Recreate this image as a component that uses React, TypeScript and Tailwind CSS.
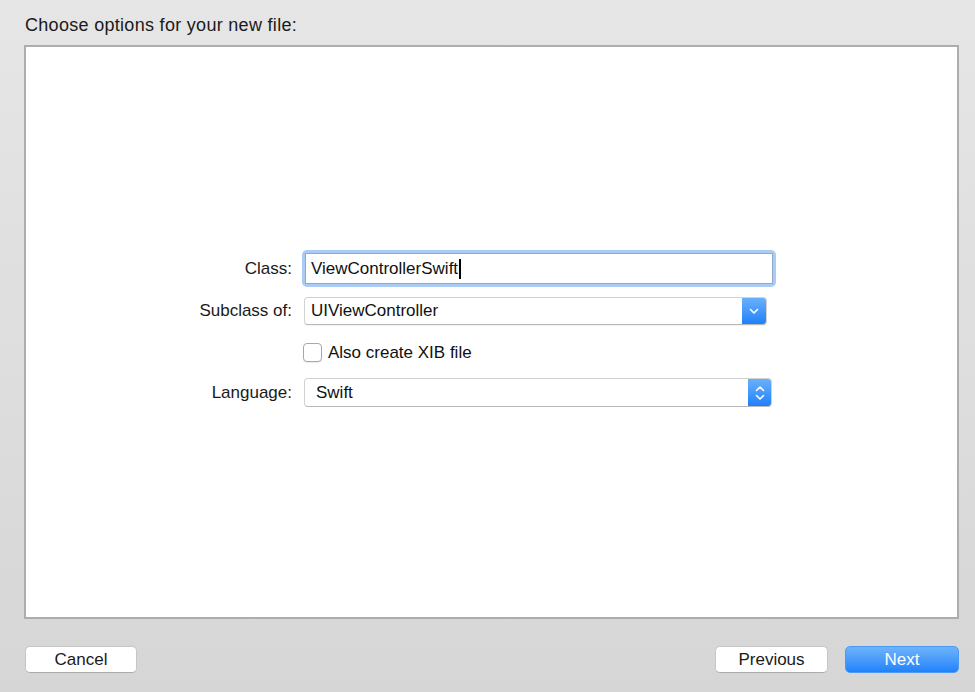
import { useState } from 'react';

function ChevronDown() {
  return (
    <svg width="10" height="7" viewBox="0 0 10 7" fill="none">
      <path d="M1.5 1.5 L5 5 L8.5 1.5" stroke="white" strokeWidth="1.6" strokeLinecap="round" strokeLinejoin="round" />
    </svg>
  );
}

function ChevronUpDown() {
  return (
    <svg width="10" height="16" viewBox="0 0 10 16" fill="none">
      <path d="M1.5 5.5 L5 2 L8.5 5.5" stroke="white" strokeWidth="1.6" strokeLinecap="round" strokeLinejoin="round" />
      <path d="M1.5 10.5 L5 14 L8.5 10.5" stroke="white" strokeWidth="1.6" strokeLinecap="round" strokeLinejoin="round" />
    </svg>
  );
}

function Label({ text }: { text: string }) {
  return <div className="w-[92px] flex justify-end whitespace-nowrap text-[17px] text-[#1a1a1a]">{text}</div>;
}

function App() {
  const [xib, setXib] = useState(false);

  return (
    <div className="w-[975px] h-[692px] flex flex-col bg-linear-to-b from-[#e6e6e6] to-[#d6d6d6] pl-[24px] pr-[16px] font-['Liberation_Sans',Arial,sans-serif] text-[#222]">
      {/* Title */}
      <div className="h-[45px] pt-[14px] pl-[1px] text-[18px] leading-[22px] tracking-[0.3px] text-[#1a1a1a]">
        Choose options for your new file:
      </div>

      {/* Options panel */}
      <div className="h-[574px] border-2 border-[#adadad] bg-white flex flex-col pt-[203px] pl-[174px]">
        {/* Class */}
        <div className="flex items-center h-[37px]">
          <Label text="Class:" />
          <div className="ml-[10px] w-[474px] h-[37px] rounded-[5px] bg-[#a9cbf4] p-[3px]">
            <div className="h-full bg-white border border-[#8fa9c9] flex items-center pl-[5px] text-[17px] text-[#111]">
              ViewControllerSwift
              <span className="ml-[1px] w-[1.5px] h-[20px] bg-black" />
            </div>
          </div>
        </div>

        {/* Subclass of */}
        <div className="flex items-center h-[28px] mt-[10px]">
          <Label text="Subclass of:" />
          <div className="ml-[12px] w-[463px] h-[28px] flex rounded-[4px] bg-white border border-[#d2d2d2] border-b-[#b8b8b8] shadow-[0_1px_0_rgba(0,0,0,0.05)] overflow-hidden">
            <div className="flex-1 flex items-center pl-[6px] text-[17px] text-[#111]">UIViewController</div>
            <div className="w-[24px] h-full bg-linear-to-b from-[#69b0fa] to-[#1b80fa] flex items-center justify-center">
              <ChevronDown />
            </div>
          </div>
        </div>

        {/* Checkbox */}
        <div className="flex items-center h-[19px] mt-[18px]">
          <div className="w-[92px]" />
          <button
            onClick={() => setXib(!xib)}
            className="ml-[11px] flex items-center gap-[6px] text-[17px] text-[#111]"
          >
            <span className="w-[19px] h-[19px] rounded-[4px] border border-[#a8a8a8] bg-white shadow-[0_1px_1px_rgba(0,0,0,0.08)] flex items-center justify-center text-[13px]">
              {xib ? '✓' : ''}
            </span>
            Also create XIB file
          </button>
        </div>

        {/* Language */}
        <div className="flex items-center h-[29px] mt-[16px]">
          <Label text="Language:" />
          <div className="ml-[12px] w-[468px] h-[29px] flex rounded-[4px] bg-white border border-[#d2d2d2] border-b-[#b8b8b8] overflow-hidden">
            <div className="flex-1 flex items-center pl-[11px] text-[17px] text-[#111]">Swift</div>
            <div className="w-[23px] h-full bg-linear-to-b from-[#69b0fa] to-[#1b80fa] flex items-center justify-center">
              <ChevronUpDown />
            </div>
          </div>
        </div>
      </div>

      {/* Footer buttons */}
      <div className="flex justify-between items-start pt-[27px]">
        <button className="ml-[1px] w-[112px] h-[27px] rounded-[5px] bg-white border border-[#c6c6c6] border-b-[#ababab] text-[17px] text-[#1a1a1a]">
          Cancel
        </button>
        <div className="flex gap-[17px]">
          <button className="w-[113px] h-[27px] rounded-[5px] bg-white border border-[#c6c6c6] border-b-[#ababab] text-[17px] text-[#1a1a1a]">
            Previous
          </button>
          <button className="w-[114px] h-[27px] rounded-[5px] bg-linear-to-b from-[#6db3fb] to-[#1d82fb] border border-[#4c98f5] text-[17px] text-white">
            Next
          </button>
        </div>
      </div>
    </div>
  );
}

export default App;
